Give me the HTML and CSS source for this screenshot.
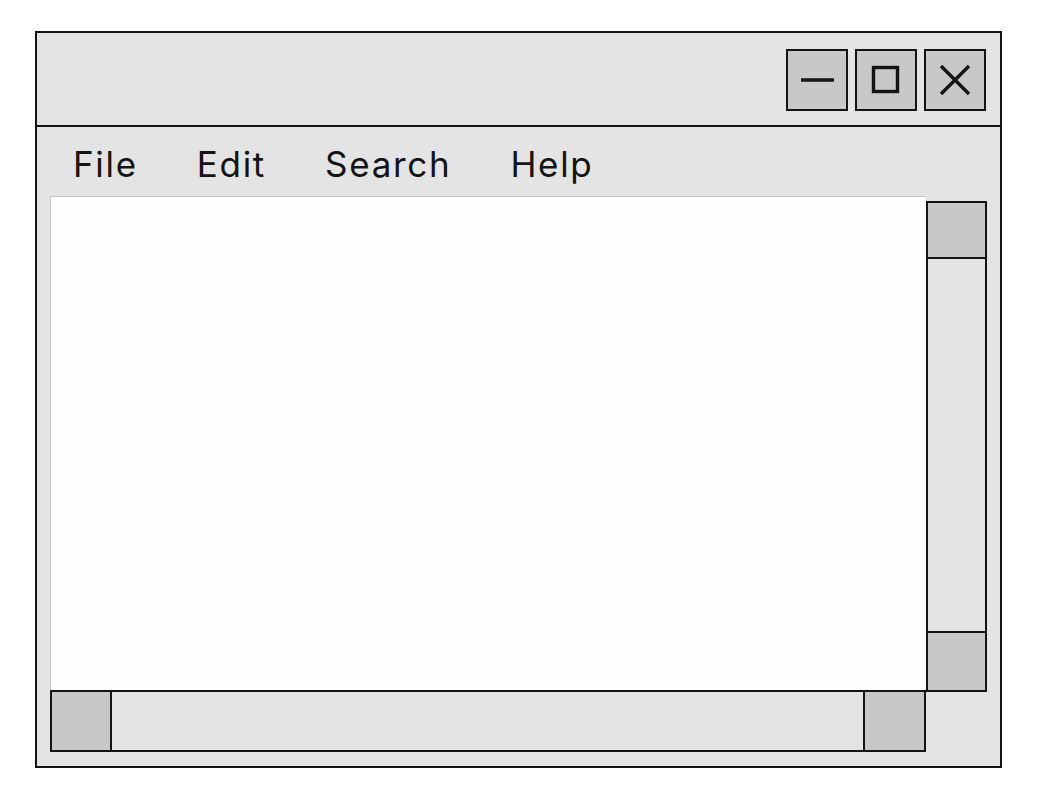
FILE: index.html
```html
<!DOCTYPE html>
<html lang="en">
<head>
<meta charset="utf-8">
<title>Window</title>
<link rel="stylesheet" href="styles.css">
</head>
<body>
<div class="window">
  <div class="titlebar">
    <div class="controls">
      <button class="ctl" aria-label="Minimize">
        <svg width="36" height="36" viewBox="0 0 36 36"><path d="M2 18H35" stroke="#141414" stroke-width="3.4" fill="none"/></svg>
      </button>
      <button class="ctl" aria-label="Maximize">
        <svg width="36" height="36" viewBox="0 0 36 36"><rect x="5.5" y="5.5" width="24" height="24" stroke="#141414" stroke-width="3.4" fill="none"/></svg>
      </button>
      <button class="ctl" aria-label="Close">
        <svg width="36" height="36" viewBox="0 0 36 36"><path d="M4 4L32 32M32 4L4 32" stroke="#141414" stroke-width="3.4" fill="none"/></svg>
      </button>
    </div>
  </div>
  <nav class="menubar">
    <span class="menu-item">File</span>
    <span class="menu-item">Edit</span>
    <span class="menu-item">Search</span>
    <span class="menu-item">Help</span>
  </nav>
  <div class="body">
    <div class="content"></div>
    <div class="vscroll">
      <div class="thumb thumb-top"></div>
      <div class="track"></div>
      <div class="thumb thumb-bottom"></div>
    </div>
    <div class="hscroll">
      <div class="thumb thumb-left"></div>
      <div class="track"></div>
      <div class="thumb thumb-right"></div>
    </div>
  </div>
</div>
</body>
</html>
```
FILE: styles.css
```css
* { box-sizing: border-box; }
html, body { margin: 0; padding: 0; background: #ffffff; }
body { padding: 31px 0 0 35px; font-family: Inter, "Liberation Sans", sans-serif; }

.window {
  width: 967px;
  height: 737px;
  border: 2px solid #141414;
  background: #e4e4e4;
  display: flex;
  flex-direction: column;
}

.titlebar {
  height: 94px;
  border-bottom: 2px solid #141414;
  display: flex;
  justify-content: flex-end;
  align-items: flex-start;
  padding: 16px 14px 0 0;
}
.controls { display: flex; gap: 7px; }
.ctl {
  width: 62px;
  height: 62px;
  padding: 0;
  margin: 0;
  border: 2px solid #141414;
  background: #c8c8c8;
  display: flex;
  align-items: center;
  justify-content: center;
}
.ctl svg { display: block; }

.menubar {
  height: 69px;
  display: flex;
  align-items: flex-start;
  padding: 20px 0 0 36px;
  gap: 59px;
}
.menu-item {
  font-size: 35px;
  line-height: 35px;
  color: #141414;
  letter-spacing: 1.7px;
}

.body {
  flex: 1;
  display: grid;
  grid-template-columns: 876px 61px;
  grid-template-rows: 494px 62px;
  padding-left: 13px;
}
.content {
  background: #fefefe;
  border-top: 1px solid #c4c4c4;
  border-left: 1px solid #c4c4c4;
}
.vscroll {
  margin-top: 5px;
  margin-bottom: -2px;
  border: 2px solid #141414;
  background: #e4e4e4;
  display: flex;
  flex-direction: column;
}
.hscroll {
  border: 2px solid #141414;
  background: #e4e4e4;
  display: flex;
}
.thumb { background: #c8c8c8; flex: none; }
.track { flex: 1; }
.thumb-top { height: 56px; border-bottom: 2px solid #141414; }
.thumb-bottom { height: 59px; border-top: 2px solid #141414; }
.thumb-left { width: 60px; border-right: 2px solid #141414; }
.thumb-right { width: 61px; border-left: 2px solid #141414; }
```
